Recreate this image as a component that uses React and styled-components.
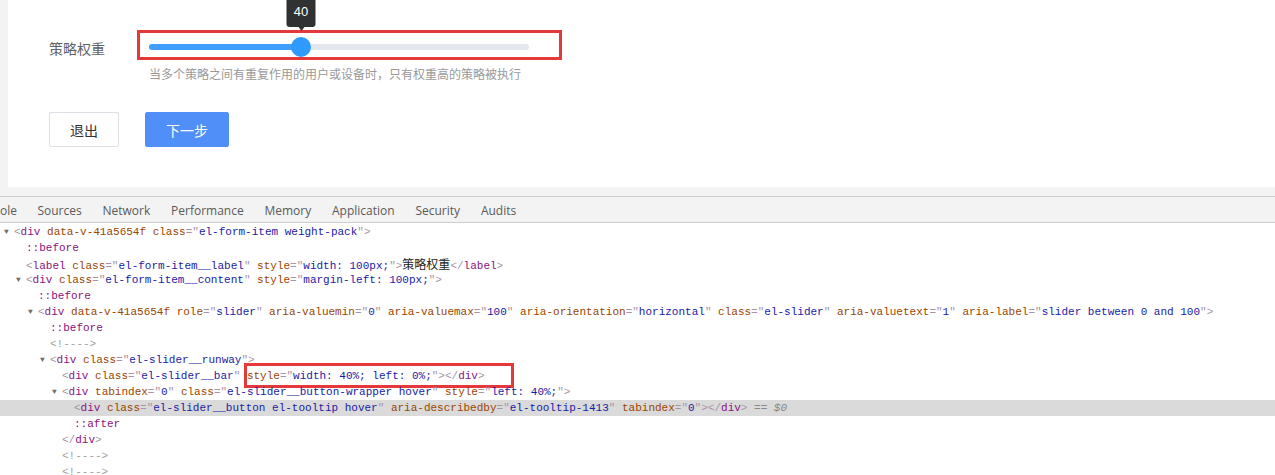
import React from 'react';
import styled, {createGlobalStyle} from 'styled-components';

const GlobalStyle = createGlobalStyle`
  body {
    margin: 0;
    background: #fff;
  }
`

const Page = styled.div`
  width: 1275px;
  height: 475px;
  overflow: hidden;
  display: flex;
  flex-direction: column;
`

// top half: the page being inspected
const Viewport = styled.div`
  height: 196px;
  flex: none;
  background: #f3f3f3;
  padding-left: 8px;
  box-sizing: border-box;
`
const Card = styled.div`
  height: 187px;
  background: #fff;
  padding: 28px 0 0 41px;
  box-sizing: border-box;
  font-family: "Noto Sans CJK SC", "Noto Sans", sans-serif;
`
const FormItem = styled.div`
  display: flex;
  align-items: flex-start;
`
const Label = styled.label`
  width: 100px;
  line-height: 40px;
  font-size: 14px;
  color: #606266;
`
const Content = styled.div`
  display: flex;
  flex-direction: column;
`
const Slider = styled.div`
  position: relative;
  height: 38px;
  width: 380px;
  display: flex;
  align-items: center;
`
const Runway = styled.div`
  position: relative;
  width: 100%;
  height: 6px;
  border-radius: 3px;
  background: #e4e7ed;
`
const Bar = styled.div`
  height: 100%;
  border-radius: 3px;
  background: #409eff;
`
const Knob = styled.div`
  position: absolute;
  top: 50%;
  width: 20px;
  height: 20px;
  border-radius: 50%;
  background: #2f9bff;
  transform: translate(-50%, -50%);
`
const Tooltip = styled.div`
  position: absolute;
  left: 50%;
  bottom: 30px;
  transform: translateX(-50%);
  width: 29px;
  padding: 8px 0 7px;
  border-radius: 3px;
  background: #303133;
  color: #fff;
  font-family: "Liberation Sans", Arial, sans-serif;
  font-size: 13px;
  line-height: 16px;
  text-align: center;

  &::after {
    content: "";
    position: absolute;
    left: 50%;
    bottom: -4px;
    margin-left: -3px;
    border: 3px solid transparent;
    border-top: 4px solid #303133;
    border-bottom: 0;
  }
`
const Marker = styled.div`
  position: absolute;
  border: 3px solid #e5383b;
  box-sizing: border-box;
  pointer-events: none;
`
const SliderMarker = styled(Marker)`
  left: -12px;
  top: 2px;
  width: 425px;
  height: 30px;
`
const Hint = styled.div`
  font-size: 12px;
  line-height: 16px;
  color: #999;
`
const Actions = styled.div`
  display: flex;
  gap: 26px;
  margin-top: 30px;
`
const Button = styled.button`
  height: 35px;
  padding: 0;
  width: ${p => p.$w}px;
  border-radius: 2px;
  font-family: "Noto Sans CJK SC", sans-serif;
  font-size: 14px;
  border: 1px solid ${p => p.$primary ? '#4f8ff7' : '#dcdfe6'};
  background: ${p => p.$primary ? '#4f8ff7' : '#fff'};
  color: ${p => p.$primary ? '#fff' : '#333'};
`

// devtools
const TabBar = styled.div`
  height: 27px;
  flex: none;
  display: flex;
  align-items: center;
  padding-top: 1px;
  background: #f3f3f3;
  border-top: 1px solid #cdcdcd;
  border-bottom: 1px solid #cdcdcd;
  box-sizing: border-box;
  font-family: "Open Sans", "Noto Sans", sans-serif;
  font-size: 12px;
  color: #5a5a5a;
  overflow: hidden;
`
const Tab = styled.div`
  padding: 0 10.4px;
  white-space: nowrap;
`
const ClippedTab = styled.div`
  width: 17px;
  margin-right: 10px;
  display: flex;
  justify-content: flex-end;
  overflow: hidden;
  white-space: nowrap;
  flex: none;
`
const Tree = styled.div`
  flex: 1;
  padding-top: 1px;
  font-family: "Liberation Mono", Consolas, monospace;
  font-size: 11px;
  color: #222;
  overflow: hidden;
`
const Row = styled.div`
  position: relative;
  height: 16px;
  line-height: 16px;
  white-space: nowrap;
  padding-left: ${p => 14 + p.$depth * 12}px;
  background: ${p => p.$selected ? '#dadada' : 'transparent'};
`
const Arrow = styled.span`
  position: absolute;
  margin-left: -10px;
  font-size: 8px;
  color: #6e6e6e;
`
const Tag = styled.span`color: #881280;`
const Punct = styled.span`color: #a894a6;`
const Attr = styled.span`color: #994500;`
const Val = styled.span`color: #1a1aa6;`
const Pseudo = styled.span`color: #881280;`
const Comment = styled.span`color: #a0a0a0;`
const Text = styled.span`
  color: #222;
  font-family: "Noto Sans CJK SC", sans-serif;
  font-size: 12px;
`
const Dollar = styled.span`
  color: #888;
  font-style: italic;
`
const CodeMarker = styled(Marker)`
  left: 244px;
  top: -5px;
  width: 270px;
  height: 25px;
`

const Open = ({name, attrs = [], close}) => (
  <>
    <Punct>&lt;</Punct><Tag>{name}</Tag>
    {attrs.map(([k, v]) => (
      <React.Fragment key={k}>
        {' '}<Attr>{k}</Attr>
        {v !== undefined && <><Punct>="</Punct><Val>{v}</Val><Punct>"</Punct></>}
      </React.Fragment>
    ))}
    <Punct>&gt;</Punct>
    {close && <><Punct>&lt;/</Punct><Tag>{name}</Tag><Punct>&gt;</Punct></>}
  </>
)

const Close = ({name}) => <><Punct>&lt;/</Punct><Tag>{name}</Tag><Punct>&gt;</Punct></>

const tabs = ['Sources', 'Network', 'Performance', 'Memory', 'Application', 'Security', 'Audits']

const App = () => {
  const value = 40
  return (
    <Page>
      <GlobalStyle />
      <Viewport>
        <Card>
          <FormItem>
            <Label>策略权重</Label>
            <Content>
              <Slider>
                <SliderMarker />
                <Runway>
                  <Bar style={{width: `${value}%`}} />
                  <Knob style={{left: `${value}%`}}>
                    <Tooltip>{value}</Tooltip>
                  </Knob>
                </Runway>
              </Slider>
              <Hint>当多个策略之间有重复作用的用户或设备时，只有权重高的策略被执行</Hint>
            </Content>
          </FormItem>
          <Actions>
            <Button $w={70}>退出</Button>
            <Button $w={84} $primary>下一步</Button>
          </Actions>
        </Card>
      </Viewport>

      <TabBar>
        <ClippedTab>Console</ClippedTab>
        {tabs.map(t => <Tab key={t}>{t}</Tab>)}
      </TabBar>

      <Tree>
        <Row $depth={0}><Arrow>▼</Arrow><Open name="div" attrs={[['data-v-41a5654f'], ['class', 'el-form-item weight-pack']]} /></Row>
        <Row $depth={1}><Pseudo>::before</Pseudo></Row>
        <Row $depth={1}>
          <Punct>&lt;</Punct><Tag>label</Tag> <Attr>class</Attr><Punct>="</Punct><Val>el-form-item__label</Val><Punct>"</Punct> <Attr>style</Attr><Punct>="</Punct><Val>width: 100px;</Val><Punct>"</Punct><Punct>&gt;</Punct>
          <Text>策略权重</Text><Close name="label" />
        </Row>
        <Row $depth={1}><Arrow>▼</Arrow><Open name="div" attrs={[['class', 'el-form-item__content'], ['style', 'margin-left: 100px;']]} /></Row>
        <Row $depth={2}><Pseudo>::before</Pseudo></Row>
        <Row $depth={2}><Arrow>▼</Arrow><Open name="div" attrs={[
          ['data-v-41a5654f'], ['role', 'slider'], ['aria-valuemin', '0'], ['aria-valuemax', '100'],
          ['aria-orientation', 'horizontal'], ['class', 'el-slider'], ['aria-valuetext', '1'],
          ['aria-label', 'slider between 0 and 100']]} /></Row>
        <Row $depth={3}><Pseudo>::before</Pseudo></Row>
        <Row $depth={3}><Comment>&lt;!----&gt;</Comment></Row>
        <Row $depth={3}><Arrow>▼</Arrow><Open name="div" attrs={[['class', 'el-slider__runway']]} /></Row>
        <Row $depth={4}>
          <Open name="div" attrs={[['class', 'el-slider__bar'], ['style', 'width: 40%; left: 0%;']]} close />
          <CodeMarker />
        </Row>
        <Row $depth={4}><Arrow>▼</Arrow><Open name="div" attrs={[['tabindex', '0'], ['class', 'el-slider__button-wrapper hover'], ['style', 'left: 40%;']]} /></Row>
        <Row $depth={5} $selected>
          <Open name="div" attrs={[['class', 'el-slider__button el-tooltip hover'], ['aria-describedby', 'el-tooltip-1413'], ['tabindex', '0']]} close />
          {' '}<Dollar>== $0</Dollar>
        </Row>
        <Row $depth={5}><Pseudo>::after</Pseudo></Row>
        <Row $depth={4}><Close name="div" /></Row>
        <Row $depth={4}><Comment>&lt;!----&gt;</Comment></Row>
        <Row $depth={4}><Comment>&lt;!----&gt;</Comment></Row>
      </Tree>
    </Page>
  )
}

export default App;
